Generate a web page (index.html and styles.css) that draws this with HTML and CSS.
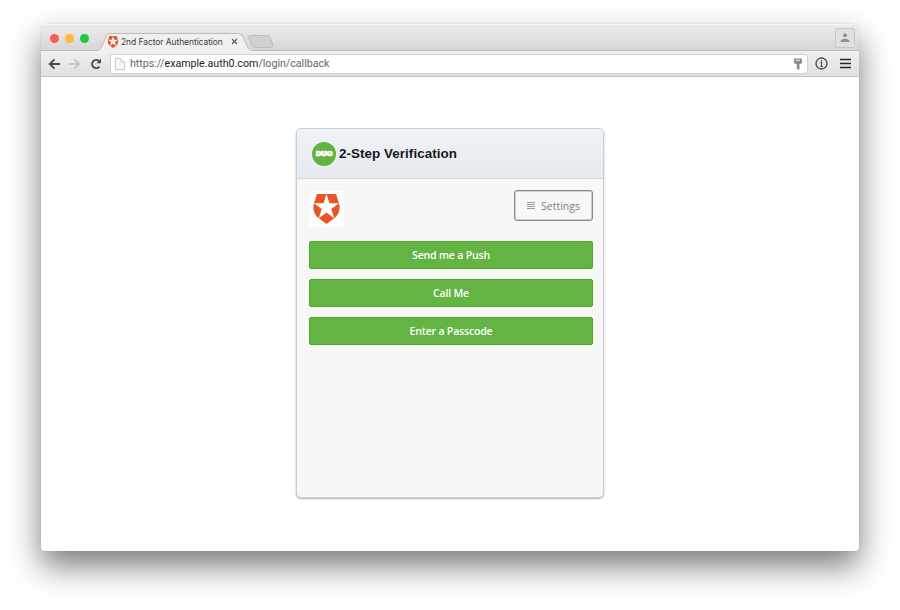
FILE: index.html
```html
<!DOCTYPE html>
<html lang="en">
<head>
<meta charset="utf-8">
<title>2nd Factor Authentication</title>
<link rel="stylesheet" href="styles.css">
</head>
<body>
<svg class="defs" aria-hidden="true">
  <symbol id="shield" viewBox="1.4 0 21.2 24">
    <path fill="#eb5424" d="M21.98 7.448L19.62 0H4.347L2.02 7.448c-1.352 4.312.03 9.206 3.815 12.015L12.007 24l6.157-4.552c3.755-2.81 5.182-7.688 3.815-12.015l-6.16 4.58 2.343 7.45-6.157-4.597-6.158 4.58 2.358-7.433-6.188-4.55 7.63-.045L12.008 0l2.356 7.404 7.615.044z"/>
  </symbol>
</svg>
<div class="window">
  <header class="tabstrip">
    <div class="lights"><i class="light red"></i><i class="light yellow"></i><i class="light green"></i></div>
    <div class="tab">
      <svg class="tab-shape" width="182" height="21" viewBox="0 0 182 21">
        <path d="M-3 17.5H-2Q1 17.500 2.500 14L7.500 3Q8.700 .5 11.500 .5H139.500Q142.500 .5 143.700 3L148.500 14Q150 17.500 153.500 17.500H182V21H-3Z" fill="#f0f0f0"/>
        <path d="M-3 17.5H-2Q1 17.500 2.500 14L7.500 3Q8.700 .5 11.500 .5H139.500Q142.500 .5 143.700 3L148.500 14Q150 17.500 153.500 17.500H182" fill="none" stroke="#bcbcbc"/>
        <path d="M151.500 2.500H168Q170.500 2.500 171.300 4.500L173.500 11.500Q174.300 14.500 171.500 14.500H156Q154 14.500 153 12.500L149.800 5Q149 2.500 151.500 2.500Z" fill="#d0d0d0" stroke="#bcbcbc"/>
      </svg>
      <svg class="favicon" width="12" height="12" viewBox="0 0 24 24"><path d="M3 1H21V19L12 23L3 19Z" fill="#fff"/><use href="#shield" width="24" height="24"/></svg>
      <span class="tab-title">2nd Factor Authentication</span>
      <svg class="close" width="7" height="7" viewBox="0 0 7 7"><path d="M1 1L6 6M6 1L1 6" stroke="#555" stroke-width="1.1"/></svg>
    </div>
    <div class="profile">
      <svg width="10" height="10" viewBox="0 0 10 10" fill="#929292"><circle cx="5" cy="2.300" r="2"/><path d="M.6 9V8Q1 5.900 5 5.700Q9 5.900 9.400 8V9Z"/></svg>
    </div>
  </header>
  <nav class="toolbar">
    <svg class="back" width="13" height="12" viewBox="0 0 13 12" fill="none" stroke="#484848" stroke-width="1.800"><path d="M12 6H2M6.500 1.300L1.700 6L6.500 10.700"/></svg>
    <svg class="forward" width="13" height="12" viewBox="0 0 13 12" fill="none" stroke="#c6c6c6" stroke-width="1.800"><path d="M1 6H11M6.500 1.300L11.300 6L6.500 10.700"/></svg>
    <svg class="reload" width="12" height="12" viewBox="0 0 12 12"><path d="M9.500 8.400A4.100 4.100 0 1 1 9 3.100" fill="none" stroke="#484848" stroke-width="1.800"/><path d="M11 .8V5.300H6.500Z" fill="#484848"/></svg>
    <div class="address">
      <svg class="page" width="10" height="12" viewBox="0 0 10 12" fill="#f5f5f5" stroke="#cacaca"><path d="M.5 .5H6L9.500 4V11.500H.5Z"/><path d="M6 .5V4H9.500"/></svg>
      <span class="url">https://<b>example.auth0.com</b>/login/callback</span>
      <svg class="key" width="8" height="12" viewBox="0 0 8 12"><path d="M0 1.500Q0 .5 1 .5H7Q8 .5 8 1.500V4.500Q8 6 5.500 6V11L4.500 12L2.700 10.500V6Q0 6 0 4.500Z" fill="#8c8c8c"/><path d="M2 2.300H6" stroke="#eee"/></svg>
    </div>
    <svg class="info" width="13" height="13" viewBox="0 0 13 13"><circle cx="6.500" cy="6.500" r="5.500" fill="none" stroke="#464646" stroke-width="1.300"/><path d="M6.500 3V4.400M5.500 5.500H6.500V9.500M5.300 9.500H7.700" fill="none" stroke="#464646" stroke-width="1.200"/></svg>
    <svg class="menu" width="11" height="11" viewBox="0 0 11 11"><path d="M0 1.500H11M0 5.500H11M0 9.500H11" stroke="#262626" stroke-width="1.700"/></svg>
  </nav>
  <main class="content">
    <section class="card">
      <header class="card-head">
        <span class="duo"><span class="duo-name">DUO</span></span>
        <h1>2-Step Verification</h1>
      </header>
      <div class="card-body">
        <div class="row">
          <div class="brand"><svg width="27" height="30"><use href="#shield" width="27" height="30"/></svg></div>
          <button class="settings"><svg width="8" height="7" viewBox="0 0 8 7"><path d="M0 .5H8M0 2.500H8M0 4.500H8M0 6.500H8" stroke="#9b9b9b"/></svg>Settings</button>
        </div>
        <button class="action">Send me a Push</button>
        <button class="action">Call Me</button>
        <button class="action">Enter a Passcode</button>
      </div>
    </section>
  </main>
</div>
</body>
</html>
```
FILE: styles.css
```css
* { box-sizing: border-box; }
body { margin: 0; padding: 24px 41px; height: 610px; overflow: hidden; background: #fff; }
svg { display: block; flex: none; }
button { margin: 0; font-family: "Open Sans", sans-serif; }
.defs { position: absolute; width: 0; height: 0; }

.window {
  display: flex; flex-direction: column;
  width: 818px; height: 527px;
  background: #fff;
  border-radius: 4px 4px 3px 3px;
  box-shadow: 0 0 1px rgba(0,0,0,.3), 0 15px 32px rgba(0,0,0,.52);
  overflow: hidden;
}
.tabstrip {
  display: flex;
  height: 27px; flex: none;
  padding-left: 9px;
  background: linear-gradient(#ebebeb, #d7d7d7);
  border-top: 1px solid #f7f7f7;
  border-bottom: 1px solid #bcbcbc;
}
.lights { display: flex; gap: 6px; padding-top: 8.500px; width: 49px; }
.light { width: 9px; height: 9px; border-radius: 50%; flex: none; }
.red { background: #fc5b57; }
.yellow { background: #fdbc32; }
.green { background: #1fc940; }
.tab { position: relative; display: flex; align-items: center; width: 182px; height: 21px; margin-top: 8px; padding: 0 0 4px 8px; }
.tab-shape { position: absolute; left: 0; top: 0; overflow: visible; }
.favicon, .tab-title, .close { position: relative; }
.tab-title { width: 107px; margin-left: 2px; font: 8.500px Inter, sans-serif; letter-spacing: -.08px; color: #3d3d3d; white-space: nowrap; }
.close { margin-left: 3px; }
.profile { display: flex; align-items: center; justify-content: center; width: 20px; height: 20px; margin: 3px 4px 0 auto; border: 1px solid #c8c8c8; border-radius: 2px; background: #e0e0e0; }

.toolbar {
  display: flex; align-items: center;
  height: 26px; flex: none;
  padding: 0 8px 0 7px;
  background: linear-gradient(#f0f0f0, #e0e0e0);
  border-bottom: 1px solid #c5c5c5;
}
.forward { margin-left: 7px; }
.reload { margin-left: 9px; }
.address { display: flex; align-items: center; width: 698px; height: 20px; margin-left: 8px; padding: 0 5px; background: #fff; border: 1px solid #d2d2d2; border-radius: 3px; }
.page { margin-left: -1px; }
.url { margin-left: 5px; font: 10.700px Roboto, sans-serif; letter-spacing: -.02px; color: #666; }
.url b { font-weight: 400; color: #222; }
.key { margin-left: auto; }
.info { margin-left: 7px; }
.menu { margin-left: auto; }

.content { display: flex; justify-content: center; padding-top: 51px; }
.card { width: 308px; height: 370px; border: 1px solid #c8d0d7; border-radius: 5px; background: #f7f7f7; box-shadow: 0 1px 2px rgba(0,0,0,.3); overflow: hidden; }
.card-head { display: flex; align-items: center; height: 50px; padding-left: 15px; background: linear-gradient(#eff3f6, #e5eaee); border-bottom: 1px solid #d4dade; }
.duo { display: flex; align-items: center; justify-content: center; width: 24px; height: 24px; border-radius: 50%; background: #62b440; }
.duo-name { font: 900 6.500px Inter, sans-serif; color: #fff; -webkit-text-stroke: .7px #fff; transform: scale(1.150, .95); }
h1 { margin: 0 0 0 3px; font: bold 13.400px "Liberation Sans", sans-serif; letter-spacing: .06px; color: #15181f; white-space: nowrap; }
.card-body { display: flex; flex-direction: column; padding: 12px 10px 0 12px; }
.row { display: flex; justify-content: space-between; height: 50px; }
.brand { display: flex; justify-content: center; width: 35px; height: 36px; padding-top: 3px; background: #fff; }
.settings { display: flex; align-items: center; justify-content: center; gap: 6px; width: 79px; height: 31px; margin-top: -1px; padding: 0; background: #f8f8f8; border: 1.500px solid #888; box-shadow: inset 0 0 0 .5px #aaa; border-radius: 3px; font-size: 10.500px; color: #7e7e7e; }
.action { width: 284px; height: 28px; margin-bottom: 10px; padding: 0 0 1px; border: 1px solid #4eaa27; border-radius: 2px; background: #63b443; color: #fff; font-size: 10.600px; font-weight: 600; letter-spacing: -.22px; }
```
